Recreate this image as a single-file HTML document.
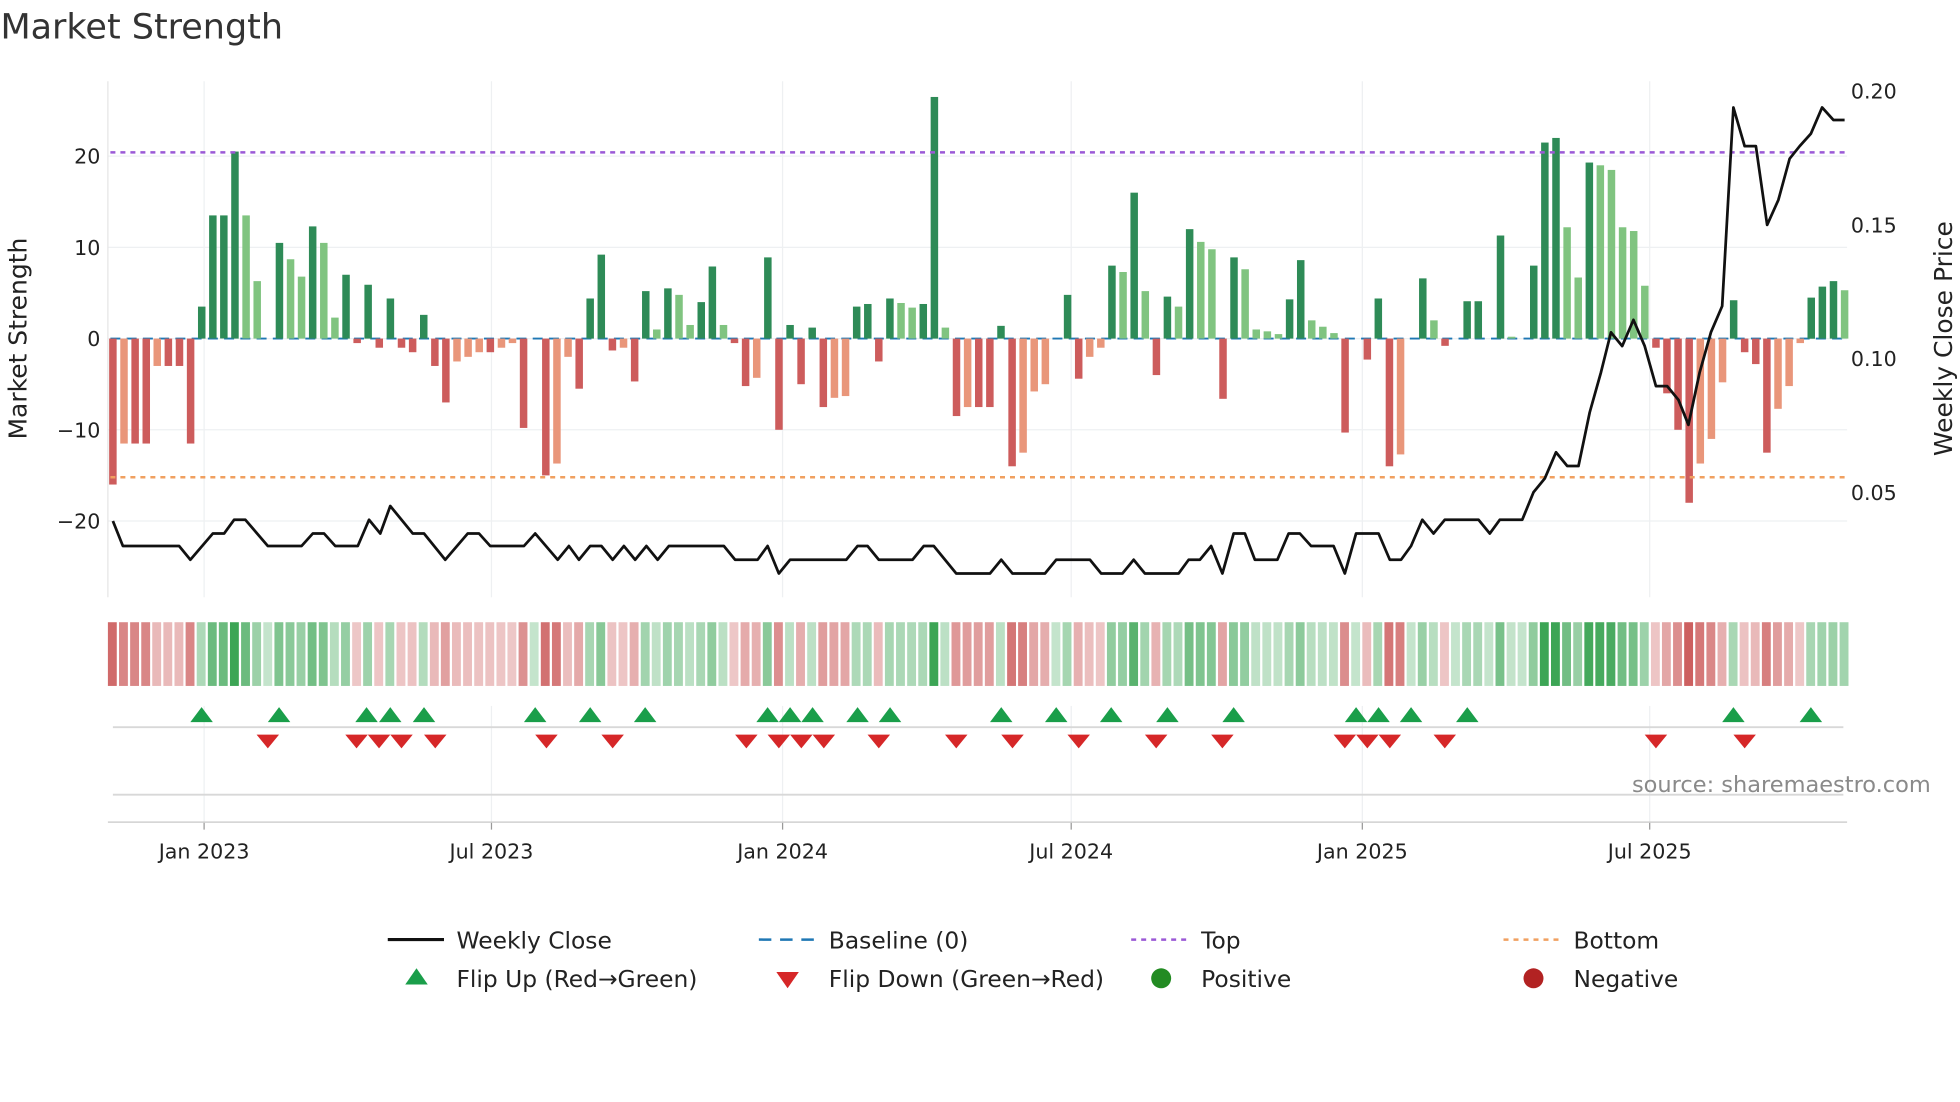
<!DOCTYPE html>
<html><head><meta charset="utf-8"><style>
html,body{margin:0;padding:0;background:#fff;}
svg{display:block;font-family:"DejaVu Sans","Liberation Sans",sans-serif;}
</style></head><body>
<svg id="s" width="1960" height="1102" viewBox="0 0 1568 882" xmlns="http://www.w3.org/2000/svg"></svg>
<script>
var S=document.getElementById('s');var h='';
function add(x){h+=x;}
var vals=[-16,-11.5,-11.5,-11.5,-3,-3,-3,-11.5,3.5,13.5,13.5,20.5,13.5,6.3,0,10.5,8.7,6.8,12.3,10.5,2.3,7,-0.5,5.9,-1,4.4,-1,-1.5,2.6,-3,-7,-2.5,-2,-1.5,-1.5,-1,-0.5,-9.8,0,-15,-13.7,-2,-5.5,4.4,9.2,-1.3,-1,-4.7,5.2,1,5.5,4.8,1.5,4,7.9,1.5,-0.5,-5.2,-4.3,8.9,-10,1.5,-5,1.2,-7.5,-6.5,-6.3,3.5,3.8,-2.5,4.4,3.9,3.4,3.8,26.5,1.2,-8.5,-7.5,-7.5,-7.5,1.4,-14,-12.5,-5.8,-5,0,4.8,-4.4,-2,-1,8,7.3,16,5.2,-4,4.6,3.5,12,10.6,9.8,-6.6,8.9,7.6,1,0.8,0.5,4.3,8.6,2,1.3,0.6,-10.3,0,-2.3,4.4,-14,-12.7,0,6.6,2,-0.8,0,4.1,4.1,0,11.3,0.2,0,8,21.5,22,12.2,6.7,19.3,19,18.5,12.2,11.8,5.8,-1,-6,-10,-18,-13.7,-11,-4.8,4.2,-1.5,-2.8,-12.5,-7.7,-5.2,-0.5,4.5,5.7,6.3,5.3];
var n=vals.length,x0=90,dx=(1476-90)/(n-1);
function Y(v){return 271-v*7.3;}
[125,198,271,344,417].forEach(function(y){add('<line x1="86" x2="1478" y1="'+y+'" y2="'+y+'" stroke="#eef0f2" stroke-width="1"/>');});
var ticks=[[163,'Jan 2023'],[393,'Jul 2023'],[626,'Jan 2024'],[857,'Jul 2024'],[1090,'Jan 2025'],[1320,'Jul 2025']];
ticks.forEach(function(t){add('<line x1="'+t[0]+'" x2="'+t[0]+'" y1="65" y2="478" stroke="#eef0f2"/><line x1="'+t[0]+'" x2="'+t[0]+'" y1="565" y2="658" stroke="#eef0f2"/><line x1="'+t[0]+'" x2="'+t[0]+'" y1="658" y2="664" stroke="#999"/><text x="'+t[0]+'" y="687" font-size="16.5" text-anchor="middle" fill="#222">'+t[1]+'</text>');});
add('<line x1="86" x2="86" y1="65" y2="478" stroke="#e6e6e6"/>');
add('<line x1="88" x2="1478" y1="271" y2="271" stroke="#1f77b4" stroke-width="1.5" stroke-dasharray="8,5"/>');
for(var i=0;i<n;i++){var v=vals[i],p=i?vals[i-1]:0,x=x0+i*dx-3,c;
 if(v>=0)c=(v>=p)?'#2e8b57':'#80c480';else c=(v<=p)?'#cd5c5c':'#e9967a';
 var y=Math.min(Y(v),271),hh=Math.abs(v*7.3);if(hh<0.3)continue;
 add('<rect x="'+x.toFixed(1)+'" y="'+y.toFixed(1)+'" width="6" height="'+hh.toFixed(1)+'" fill="'+c+'"/>');}
add('<line x1="88" x2="1478" y1="122" y2="122" stroke="#9b59d6" stroke-width="2" stroke-dasharray="4,4"/>');
add('<line x1="88" x2="1478" y1="382" y2="382" stroke="#f0a060" stroke-width="2" stroke-dasharray="4,4"/>');
var pr=[90,417,98,437,143,437,152,448,170,427,179,427,187,416,196,416,214,437,241,437,250,427,259,427,268,437,286,437,295,416,304,427,312,405,330,427,339,427,356,448,374,427,383,427,392,437,419,437,428,427,446,448,455,437,463,448,472,437,481,437,490,448,499,437,508,448,517,437,526,448,535,437,579,437,588,448,606,448,614,437,623,459,632,448,677,448,686,437,694,437,703,448,730,448,739,437,747,437,765,459,792,459,801,448,810,459,836,459,845,448,872,448,881,459,898,459,907,448,916,459,943,459,951,448,960,448,969,437,978,459,987,427,996,427,1004,448,1022,448,1031,427,1040,427,1049,437,1067,437,1076,459,1085,427,1103,427,1112,448,1121,448,1129,437,1138,416,1147,427,1156,416,1183,416,1192,427,1200,416,1218,416,1227,394,1236,383,1245,362,1254,373,1263,373,1272,330,1281,298,1289,266,1298,277,1307,256,1316,277,1325,309,1334,309,1343,320,1351,340,1360,298,1369,266,1378,245,1387,86,1396,117,1405,117,1414,180,1423,160,1432,127,1440,117,1449,107,1458,86,1467,96,1476,96];
var d='M'+pr[0]+' '+pr[1];for(var k=2;k<pr.length;k+=2)d+=' L'+pr[k]+' '+pr[k+1];
add('<path d="'+d+'" fill="none" stroke="#111" stroke-width="2.2" stroke-linejoin="round"/>');
[[125,'20'],[198,'10'],[271,'0'],[344,'\u221210'],[417,'\u221220']].forEach(function(t){add('<text x="80" y="'+(t[0]+6)+'" font-size="16.5" text-anchor="end" fill="#222">'+t[1]+'</text>');});
[[73,'0.20'],[180,'0.15'],[287,'0.10'],[394,'0.05']].forEach(function(t){add('<text x="1481" y="'+(t[0]+6)+'" font-size="16.5" fill="#222">'+t[1]+'</text>');});
add('<text transform="translate(21,271) rotate(-90)" font-size="20" text-anchor="middle" fill="#222">Market Strength</text>');
add('<text transform="translate(1562,271) rotate(-90)" font-size="20" text-anchor="middle" fill="#222">Weekly Close Price</text>');
add('<text x="0" y="31" font-size="28" fill="#333">Market Strength</text>');
for(var i=0;i<n;i++){var v=vals[i],x=x0+i*dx-4,a=Math.min(1,0.3+Math.abs(v)/22*0.75),c;
 c=v>0?'rgba(60,165,85,'+a.toFixed(2)+')':'rgba(200,80,80,'+a.toFixed(2)+')';
 if(v==0)c='rgba(60,165,85,0.3)';
 add('<rect x="'+x.toFixed(1)+'" y="498" width="'+(dx-1.8).toFixed(1)+'" height="51" fill="'+c+'"/>');}
add('<line x1="90" x2="1475" y1="582" y2="582" stroke="#d8d8d8" stroke-width="1.5"/>');
add('<line x1="90" x2="1475" y1="636" y2="636" stroke="#d8d8d8" stroke-width="1.5"/>');
add('<line x1="86" x2="1478" y1="658" y2="658" stroke="#d0d0d0" stroke-width="1.2"/>');
[161,223,293,312,339,428,472,516,614,632,650,686,712,801,845,889,934,987,1085,1103,1129,1174,1387,1449].forEach(function(x){add('<path d="M'+(x-9)+' 578 L'+x+' 566 L'+(x+9)+' 578 Z" fill="#1a9e4a"/>');});
[214,285,303,321,348,437,490,597,623,641,659,703,765,810,863,925,978,1076,1094,1112,1156,1325,1396].forEach(function(x){add('<path d="M'+(x-9)+' 588 L'+x+' 599 L'+(x+9)+' 588 Z" fill="#d62728"/>');});
add('<text x="1545" y="634" font-size="18" text-anchor="end" fill="#8a8a8a">source: sharemaestro.com</text>');
var fs=18.7;
add('<line x1="310" x2="355" y1="752" y2="752" stroke="#111" stroke-width="2.5"/><text x="365" y="759" font-size="'+fs+'" fill="#222">Weekly Close</text>');
add('<line x1="607" x2="652" y1="752" y2="752" stroke="#1f77b4" stroke-width="2" stroke-dasharray="10,7"/><text x="663" y="759" font-size="'+fs+'" fill="#222">Baseline (0)</text>');
add('<line x1="905" x2="950" y1="752" y2="752" stroke="#9b59d6" stroke-width="2" stroke-dasharray="4,4"/><text x="961" y="759" font-size="'+fs+'" fill="#222">Top</text>');
add('<line x1="1203" x2="1248" y1="752" y2="752" stroke="#f0a060" stroke-width="2" stroke-dasharray="4,4"/><text x="1259" y="759" font-size="'+fs+'" fill="#222">Bottom</text>');
add('<path d="M324 788 L333 775 L342 788 Z" fill="#1a9e4a"/><text x="365" y="790" font-size="'+fs+'" fill="#222">Flip Up (Red\u2192Green)</text>');
add('<path d="M621 778 L630 791 L639 778 Z" fill="#d62728"/><text x="663" y="790" font-size="'+fs+'" fill="#222">Flip Down (Green\u2192Red)</text>');
add('<circle cx="929" cy="783" r="8" fill="#228b22"/><text x="961" y="790" font-size="'+fs+'" fill="#222">Positive</text>');
add('<circle cx="1227" cy="783" r="8" fill="#b22222"/><text x="1259" y="790" font-size="'+fs+'" fill="#222">Negative</text>');
S.innerHTML=h;
</script>
</body></html>
